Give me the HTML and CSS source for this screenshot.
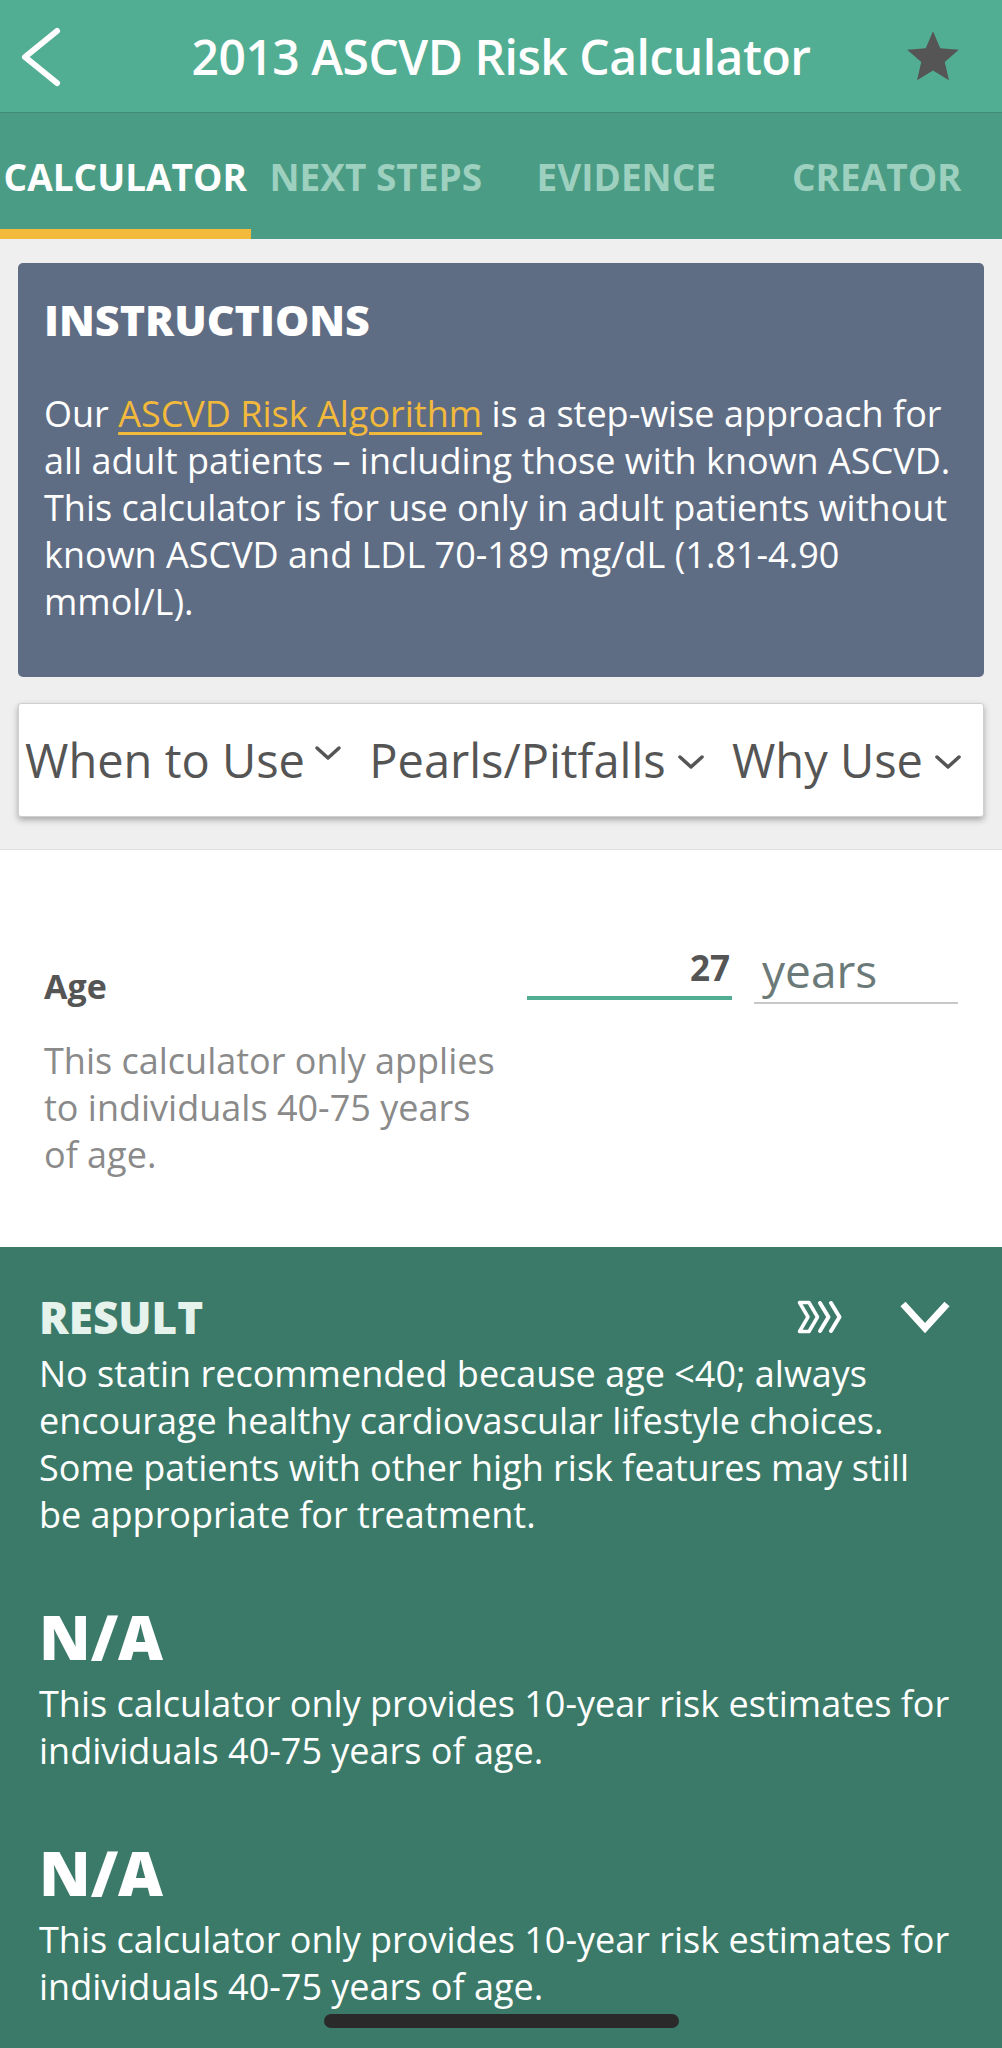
FILE: index.html
```html
<!DOCTYPE html>
<html lang="en">
<head>
<meta charset="utf-8">
<title>2013 ASCVD Risk Calculator</title>
<link rel="stylesheet" href="styles.css">
</head>
<body>
<div class="app">
  <header class="topbar">
    <svg class="back" width="44" height="64" viewBox="0 0 44 64"><polyline points="37,7 5,33 37,59" fill="none" stroke="#fff" stroke-width="6" stroke-linecap="round" stroke-linejoin="round"/></svg>
    <h1 class="title">2013 ASCVD Risk Calculator</h1>
    <svg class="star" width="62" height="62" viewBox="0 0 24 24"><path d="M12 17.27L18.18 21l-1.64-7.03L22 9.24l-7.19-.61L12 2 9.19 8.63 2 9.24l5.46 4.73L5.82 21z" fill="#555"/></svg>
  </header>
  <nav class="tabs">
    <div class="tab active">CALCULATOR</div>
    <div class="tab">NEXT STEPS</div>
    <div class="tab">EVIDENCE</div>
    <div class="tab">CREATOR</div>
  </nav>
  <section class="graybox">
    <div class="instructions">
      <h2 class="ins-title">INSTRUCTIONS</h2>
      <p class="ins-text">Our <a class="link" href="#">ASCVD Risk Algorithm</a> is a step-wise approach for<br>all adult patients – including those with known ASCVD.<br>This calculator is for use only in adult patients without<br>known ASCVD and LDL 70-189 mg/dL (1.81-4.90<br>mmol/L).</p>
    </div>
    <div class="infotabs">
      <div class="infotab">When to Use<svg class="chev chev-up" width="30" height="18" viewBox="0 0 30 18"><polyline points="4,4 15,14 26,4" fill="none" stroke="#555" stroke-width="3.5" stroke-linecap="round" stroke-linejoin="round"/></svg></div>
      <div class="infotab">Pearls/Pitfalls<svg class="chev" width="30" height="18" viewBox="0 0 30 18"><polyline points="4,4 15,14 26,4" fill="none" stroke="#555" stroke-width="3.5" stroke-linecap="round" stroke-linejoin="round"/></svg></div>
      <div class="infotab">Why Use<svg class="chev" width="30" height="18" viewBox="0 0 30 18"><polyline points="4,4 15,14 26,4" fill="none" stroke="#555" stroke-width="3.5" stroke-linecap="round" stroke-linejoin="round"/></svg></div>
    </div>
  </section>
  <section class="inputs">
    <div class="field">
      <div class="field-label">
        <div class="label">Age</div>
        <div class="hint">This calculator only applies<br>to individuals 40-75 years<br>of age.</div>
      </div>
      <div class="field-input">
        <div class="value">27</div>
        <div class="unit">years</div>
      </div>
    </div>
  </section>
  <section class="result">
    <div class="result-head">
      <h2 class="result-title">RESULT</h2>
      <div class="result-icons">
        <svg width="48" height="34" viewBox="0 0 48 34"><path d="M2.5,2.5 H12 L20.5,17 L12,31.5 H2.5 L11,17 Z" fill="none" stroke="#fff" stroke-width="3.5" stroke-linejoin="round"/><polyline points="23,3 31.5,17 23,31" fill="none" stroke="#fff" stroke-width="4" stroke-linecap="round" stroke-linejoin="round"/><polyline points="34,3 42.5,17 34,31" fill="none" stroke="#fff" stroke-width="4" stroke-linecap="round" stroke-linejoin="round"/></svg>
        <svg width="52" height="34" viewBox="0 0 52 34"><polyline points="4,4 26,28 48,4" fill="none" stroke="#fff" stroke-width="7"/></svg>
      </div>
    </div>
    <p class="result-text">No statin recommended because age &lt;40; always<br>encourage healthy cardiovascular lifestyle choices.<br>Some patients with other high risk features may still<br>be appropriate for treatment.</p>
    <div class="score">N/A</div>
    <p class="score-text">This calculator only provides 10-year risk estimates for<br>individuals 40-75 years of age.</p>
    <div class="score">N/A</div>
    <p class="score-text">This calculator only provides 10-year risk estimates for<br>individuals 40-75 years of age.</p>
  </section>
  <div class="home-indicator"></div>
</div>
</body>
</html>
```
FILE: styles.css
```css
* { box-sizing: border-box; }
html, body { margin: 0; padding: 0; }
body {
  width: 1002px;
  font-family: "Open Sans", "Lato", "DejaVu Sans", sans-serif;
  background: #fff;
}
.app { position: relative; width: 1002px; min-height: 2048px; display: flex; flex-direction: column; }

.topbar {
  height: 113px;
  background: #52ae93;
  border-bottom: 1px solid #3f8a74;
  display: flex;
  align-items: center;
  padding: 0 38px 0 20px;
}
.back { flex: none; }
.title {
  flex: 1;
  margin: 0 0 0 36px;
  text-align: center;
  color: #fff;
  font-size: 48px;
  font-weight: 600;
  letter-spacing: -0.5px;
  white-space: nowrap;
}
.star { flex: none; margin-top: 2px; }

.tabs {
  height: 126px;
  background: #4a9c84;
  display: flex;
}
.tab {
  flex: 1;
  display: flex;
  align-items: center;
  justify-content: center;
  font-size: 37px;
  font-weight: 700;
  color: #9dd0bf;
  white-space: nowrap;
}
.tab.active { color: #fff; box-shadow: inset 0 -10px 0 #f2b93b; }

.graybox {
  background: #efefef;
  padding: 24px 18px 32px;
  border-bottom: 1px solid #e0e0e0;
}
.instructions {
  background: #5f6d84;
  border-radius: 5px;
  height: 414px;
  padding: 33px 26px 0;
  color: #fff;
}
.ins-title {
  margin: 0;
  font-size: 43px;
  line-height: 48px;
  font-weight: 800;
}
.ins-text {
  margin: 46px 0 0;
  font-size: 36px;
  line-height: 47px;
  white-space: nowrap;
}
.link {
  color: #f2b93b;
  text-decoration: underline;
  text-decoration-thickness: 3px;
  text-underline-offset: 5px;
}

.infotabs {
  margin-top: 26px;
  height: 114px;
  background: #fff;
  border: 1px solid #cfcfcf;
  border-radius: 3px;
  box-shadow: 0 3px 6px rgba(0,0,0,0.3);
  display: flex;
  align-items: center;
  justify-content: space-between;
  padding: 0 20px 0 6px;
  color: #555;
  font-size: 47px;
}
.infotab { display: flex; align-items: center; white-space: nowrap; }
.chev { margin-left: 10px; margin-top: 4px; }
.chev-up { margin-top: -14px; margin-left: 8px; }

.inputs {
  height: 397px;
  padding: 0 44px;
}
.field { display: flex; justify-content: space-between; align-items: flex-start; }
.field-label { padding-top: 116px; }
.label {
  font-size: 34px;
  line-height: 40px;
  font-weight: 700;
  color: #555;
}
.hint {
  margin-top: 31px;
  font-size: 36px;
  line-height: 47px;
  color: #8a8a8a;
}
.field-input { display: flex; gap: 22px; margin-top: 90px; }
.value {
  width: 205px;
  height: 60px;
  border-bottom: 4px solid #52ae93;
  text-align: right;
  font-size: 35px;
  line-height: 56px;
  font-weight: 700;
  color: #555;
  padding-right: 2px;
}
.unit {
  width: 204px;
  height: 64px;
  border-bottom: 2px solid #c8c8c8;
  padding-left: 8px;
  font-size: 46px;
  line-height: 60px;
  color: #6b7a78;
}

.result {
  flex: 1;
  background: #3b7a68;
  padding: 45px 39px 38px;
  color: #fff;
}
.result-head { display: flex; justify-content: space-between; align-items: center; }
.result-title {
  margin: 0;
  font-size: 44px;
  line-height: 50px;
  font-weight: 800;
  color: #e6f3ec;
}
.result-icons { display: flex; align-items: center; gap: 54px; margin-right: 12px; }
.result-text, .score-text {
  margin: 8px 0 0;
  font-size: 36px;
  line-height: 47px;
  white-space: nowrap;
}
.score {
  margin-top: 58px;
  font-size: 62px;
  line-height: 80px;
  font-weight: 800;
}
.score-text { margin-top: 4px; }

.home-indicator {
  position: absolute;
  left: 324px;
  top: 2014px;
  width: 355px;
  height: 14px;
  border-radius: 7px;
  background: #2a2a2a;
}
```
